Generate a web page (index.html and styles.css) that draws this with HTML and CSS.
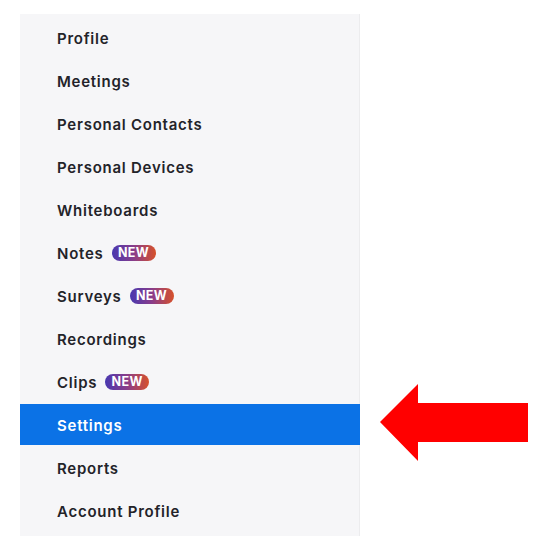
FILE: index.html
```html
<!DOCTYPE html>
<html>
<head>
<meta charset="utf-8">
<link rel="stylesheet" href="styles.css">
</head>
<body>
<div class="page">
  <nav class="sidebar">
    <div class="item">Profile</div>
    <div class="item">Meetings</div>
    <div class="item">Personal Contacts</div>
    <div class="item">Personal Devices</div>
    <div class="item">Whiteboards</div>
    <div class="item">Notes <span class="badge">NEW</span></div>
    <div class="item">Surveys <span class="badge">NEW</span></div>
    <div class="item">Recordings</div>
    <div class="item">Clips <span class="badge">NEW</span></div>
    <div class="item active">Settings</div>
    <div class="item">Reports</div>
    <div class="item">Account Profile</div>
  </nav>
  <svg class="arrow" width="150" height="80" viewBox="0 0 150 80">
    <polygon points="0,38 38,0 38,19 148,19 148,58 38,58 38,77" fill="#ff0000"/>
  </svg>
</div>
</body>
</html>
```
FILE: styles.css
```css
html, body {
  margin: 0;
  padding: 0;
  background: #ffffff;
}
.page {
  position: relative;
  width: 544px;
  height: 546px;
  padding: 14px 0 0 20px;
  box-sizing: border-box;
}
.sidebar {
  width: 339px;
  background: #f6f6f8;
  border-right: 1px solid #ececee;
  padding: 3px 0 5px 0;
  display: flex;
  flex-direction: column;
  gap: 2px;
  font-family: Inter, "Liberation Sans", Arial, sans-serif;
}
.item {
  height: 41px;
  display: flex;
  align-items: center;
  padding-left: 37px;
  padding-top: 2px;
  box-sizing: border-box;
  font-size: 15px;
  font-weight: 600;
  color: #232329;
  gap: 8px;
  letter-spacing: 0.75px;
}
.item.active {
  background: #0b72e6;
  color: #ffffff;
  margin-right: -1px;
}
.badge {
  display: inline-flex;
  align-items: center;
  justify-content: center;
  width: 44px;
  height: 16px;
  margin-top: -2px;
  border-radius: 8px;
  background: linear-gradient(90deg, #4838b0 0%, #8a3d8a 50%, #d7512a 100%);
  color: #ffffff;
  font-size: 12.5px;
  font-weight: 700;
  letter-spacing: 0.4px;
}
.arrow {
  position: absolute;
  left: 380px;
  top: 384px;
}
```
